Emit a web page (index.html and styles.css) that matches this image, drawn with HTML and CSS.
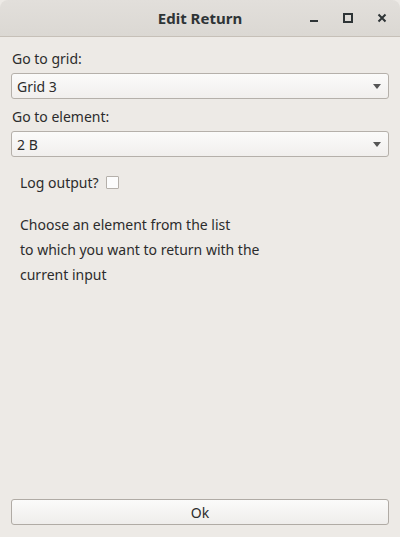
FILE: index.html
```html
<!DOCTYPE html>
<html>
<head>
<meta charset="utf-8">
<link rel="stylesheet" href="styles.css">
</head>
<body>
<div class="window">
  <div class="titlebar">
    <div class="title">Edit Return</div>
    <div class="controls">
      <svg class="ctl" width="10" height="10" viewBox="0 0 10 10"><rect x="1" y="7" width="8" height="2" fill="#2e3436"/></svg>
      <svg class="ctl" width="10" height="10" viewBox="0 0 10 10"><rect x="1" y="1" width="8" height="8" fill="none" stroke="#2e3436" stroke-width="2"/></svg>
      <svg class="ctl" width="10" height="10" viewBox="0 0 10 10"><path d="M1.5 1.5 L8.5 8.5 M8.5 1.5 L1.5 8.5" stroke="#2e3436" stroke-width="2" fill="none"/></svg>
    </div>
  </div>
  <div class="content">
    <div class="label">Go to grid:</div>
    <div class="combo"><span>Grid 3</span><span class="arrow"></span></div>
    <div class="label">Go to element:</div>
    <div class="combo"><span>2 B</span><span class="arrow"></span></div>
    <div class="check-row"><span>Log output?</span><span class="checkbox"></span></div>
    <div class="info">
      <div>Choose an element from the list</div>
      <div>to which you want to return with the</div>
      <div>current input</div>
    </div>
    <div class="spacer"></div>
    <div class="button">Ok</div>
  </div>
</div>
</body>
</html>
```
FILE: styles.css
```css
html, body {
  margin: 0;
  padding: 0;
  background: #edeae6;
}
body {
  font-family: "Noto Sans", "DejaVu Sans", sans-serif;
  color: #2c2c2c;
}
.window {
  width: 400px;
  height: 537px;
  display: flex;
  flex-direction: column;
  background: #edeae6;
}
.titlebar {
  height: 36px;
  border-bottom: 1px solid #c6c0b8;
  background: linear-gradient(#e2dfdb, #dbd8d3);
  border-radius: 8px 8px 0 0;
  position: relative;
  display: flex;
  align-items: center;
  justify-content: center;
}
.title {
  font-weight: bold;
  font-size: 15px;
  color: #2e3436;
}
.controls {
  position: absolute;
  right: 13px;
  top: 13px;
  display: flex;
  gap: 24px;
}
.ctl {
  display: block;
}
.content {
  flex: 1;
  display: flex;
  flex-direction: column;
  padding: 12px 11px 12px 11px;
}
.label {
  font-size: 14px;
  height: 20px;
  line-height: 20px;
  padding-left: 1px;
  margin-bottom: 4px;
}
.combo {
  height: 24px;
  border: 1px solid #b5b0aa;
  border-radius: 3px;
  background: linear-gradient(#fbfbfa, #f1efed);
  display: flex;
  align-items: center;
  justify-content: space-between;
  padding: 0 7px 0 5px;
  font-size: 14px;
  margin-bottom: 8px;
}
.arrow {
  width: 0;
  height: 0;
  border-left: 4px solid transparent;
  border-right: 4px solid transparent;
  border-top: 5px solid #555;
}
.check-row {
  display: flex;
  align-items: center;
  gap: 7px;
  font-size: 14px;
  padding-left: 9px;
  margin-top: 7px;
  height: 20px;
}
.checkbox {
  width: 11px;
  height: 11px;
  border: 1px solid #b5b0aa;
  background: #fcfcfc;
  border-radius: 1px;
}
.info {
  font-size: 14px;
  line-height: 25px;
  padding-left: 9px;
  margin-top: 20px;
}
.spacer {
  flex: 1;
}
.button {
  height: 24px;
  border: 1px solid #b0aba5;
  border-radius: 3px;
  background: linear-gradient(#fbfbfa, #efedeb);
  display: flex;
  align-items: center;
  justify-content: center;
  font-size: 14px;
}
```
